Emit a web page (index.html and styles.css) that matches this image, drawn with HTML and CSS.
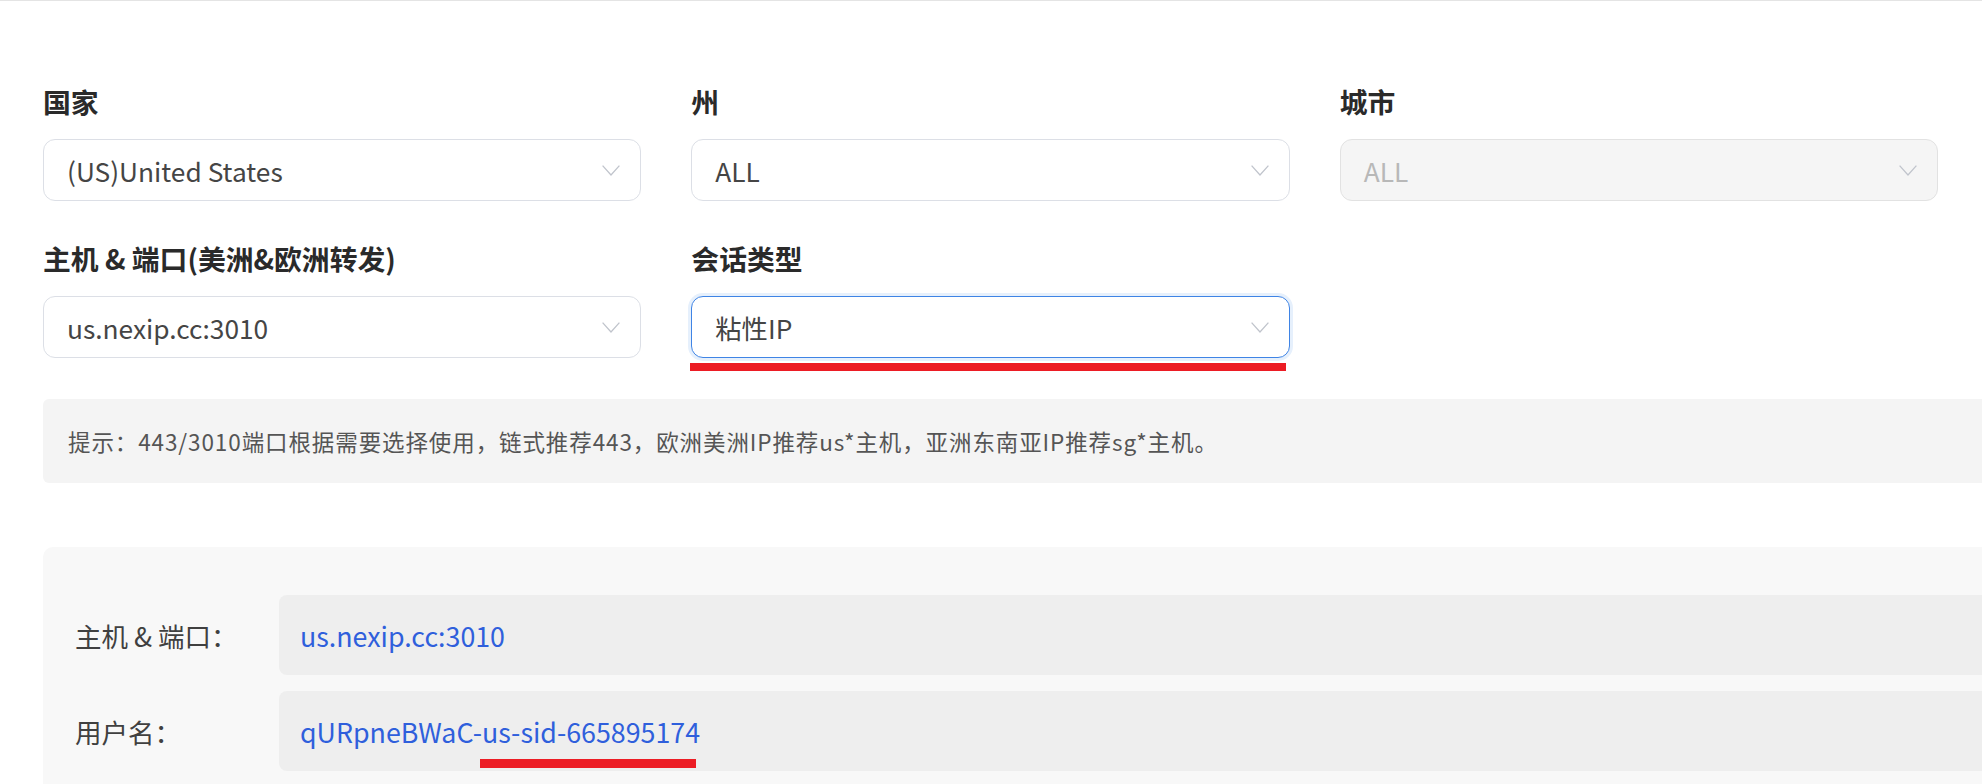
FILE: index.html
```html
<!DOCTYPE html>
<html lang="zh-CN">
<head>
<meta charset="utf-8">
<title>代理配置</title>
<link rel="stylesheet" href="styles.css">
</head>
<body>
<div class="page">
  <div class="form-grid">
    <div class="form-item">
      <div class="label">国家</div>
      <div class="select">
        <span class="select-text">(US)United States</span>
        <svg class="chev" viewBox="0 0 18 11" width="18" height="11"><polyline points="0.6,0.6 9,10 17.4,0.6" fill="none" stroke="#c0c4cc" stroke-width="1.3"/></svg>
      </div>
    </div>
    <div class="form-item">
      <div class="label">州</div>
      <div class="select">
        <span class="select-text">ALL</span>
        <svg class="chev" viewBox="0 0 18 11" width="18" height="11"><polyline points="0.6,0.6 9,10 17.4,0.6" fill="none" stroke="#c0c4cc" stroke-width="1.3"/></svg>
      </div>
    </div>
    <div class="form-item">
      <div class="label">城市</div>
      <div class="select is-disabled">
        <span class="select-text">ALL</span>
        <svg class="chev" viewBox="0 0 18 11" width="18" height="11"><polyline points="0.6,0.6 9,10 17.4,0.6" fill="none" stroke="#c0c4cc" stroke-width="1.3"/></svg>
      </div>
    </div>
    <div class="form-item">
      <div class="label">主机 &amp; 端口(美洲&amp;欧洲转发)</div>
      <div class="select">
        <span class="select-text">us.nexip.cc:3010</span>
        <svg class="chev" viewBox="0 0 18 11" width="18" height="11"><polyline points="0.6,0.6 9,10 17.4,0.6" fill="none" stroke="#c0c4cc" stroke-width="1.3"/></svg>
      </div>
    </div>
    <div class="form-item">
      <div class="label">会话类型</div>
      <div class="select is-focus">
        <span class="select-text">粘性IP</span>
        <svg class="chev" viewBox="0 0 18 11" width="18" height="11"><polyline points="0.6,0.6 9,10 17.4,0.6" fill="none" stroke="#c0c4cc" stroke-width="1.3"/></svg>
        <span class="mark-bar"></span>
      </div>
    </div>
  </div>

  <div class="tip">提示：443/3010端口根据需要选择使用，链式推荐443，欧洲美洲IP推荐us*主机，亚洲东南亚IP推荐sg*主机。</div>

  <div class="result">
    <div class="result-row">
      <div class="result-label">主机 &amp; 端口：</div>
      <div class="result-value">us.nexip.cc:3010</div>
    </div>
    <div class="result-row">
      <div class="result-label">用户名：</div>
      <div class="result-value">qURpneBWaC-<span class="marked">us-sid-665895174</span></div>
    </div>
  </div>
</div>
</body>
</html>
```

FILE: styles.css
```css
* { box-sizing: border-box; }

html, body {
  margin: 0;
  padding: 0;
  background: #ffffff;
}

body {
  font-family: "Noto Sans CJK SC", "Noto Sans", sans-serif;
  color: #303133;
  overflow: hidden;
  height: 784px;
  border-top: 1px solid #e4e4e4;
}

.page {
  padding: 80px 0 0 43px;
}

.form-grid {
  width: 1895px;
  display: grid;
  grid-template-columns: repeat(3, 1fr);
  column-gap: 50px;
  row-gap: 37px;
}

.form-item {
  display: flex;
  flex-direction: column;
}

.label {
  font-size: 27.8px;
  font-weight: 700;
  line-height: 40px;
  height: 40px;
  margin-bottom: 18px;
  color: #2a2a2a;
  white-space: nowrap;
}

.select {
  position: relative;
  height: 62px;
  border: 1px solid #dcdfe6;
  border-radius: 12px;
  background: #fff;
  display: flex;
  align-items: center;
  padding: 0 20px 0 23px;
}

.select-text {
  flex: 1;
  font-size: 26.3px;
  color: #454545;
  white-space: nowrap;
}

.chev {
  flex: none;
  display: block;
  margin-top: 1px;
}

.select.is-disabled {
  background: #f5f5f5;
  border-color: #e2e2e2;
}

.select.is-disabled .select-text {
  color: #b8b8b8;
}

.select.is-focus {
  border-color: #3f84e5;
  box-shadow: 0 0 0 3px #e6f0fc;
}

.mark-bar {
  position: absolute;
  left: -2px;
  right: 3px;
  top: calc(100% + 6px);
  height: 8px;
  background: #ec1c24;
}

.tip {
  margin-top: 41px;
  width: 2100px;
  height: 84px;
  background: #f4f4f4;
  border-radius: 6px;
  padding-left: 25px;
  display: flex;
  align-items: center;
  font-size: 22.5px;
  letter-spacing: 0.9px;
  color: #555555;
  white-space: nowrap;
}

.result {
  margin-top: 64px;
  width: 2100px;
  background: #f8f8f8;
  border-radius: 10px;
  padding: 48px 0 40px 32px;
  display: flex;
  flex-direction: column;
  gap: 16px;
}

.result-row {
  display: flex;
  align-items: stretch;
  height: 80px;
}

.result-label {
  width: 204px;
  flex: none;
  display: flex;
  align-items: center;
  font-size: 26.5px;
  color: #404040;
  white-space: nowrap;
}

.result-value {
  flex: 1;
  background: #eeeeee;
  border-radius: 8px;
  display: flex;
  align-items: center;
  padding-left: 21px;
  font-size: 26.8px;
  color: #2f5fdc;
  white-space: nowrap;
}

.marked {
  position: relative;
}

.marked::after {
  content: "";
  position: absolute;
  left: -2px;
  right: 4px;
  top: calc(100% + 8px);
  height: 9px;
  background: #ec1c24;
}
```
